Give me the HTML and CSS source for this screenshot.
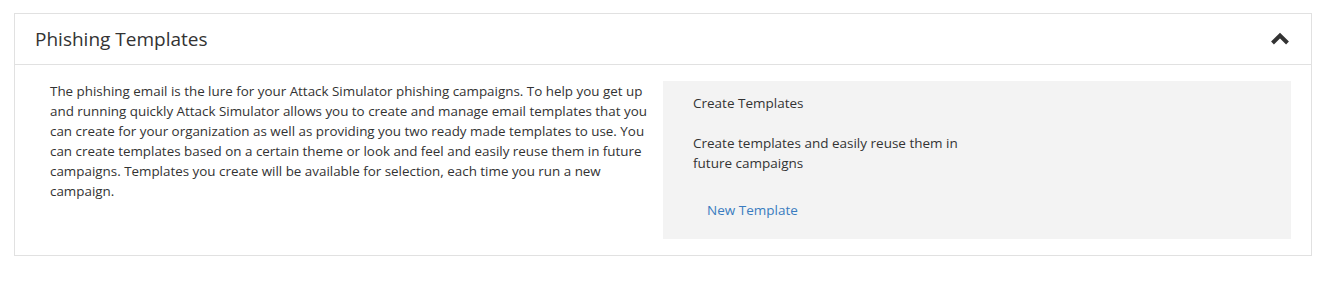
FILE: index.html
```html
<!DOCTYPE html>
<html lang="en">

<head>
    <meta charset="UTF-8">
    <meta name="viewport" content="width=device-width, initial-scale=1.0">
    <title>Phishing Templates</title>
    <link rel="stylesheet" href="styles.css">
</head>

<body>
    <div class="section">
        <div class="section-header">
            <h2>Phishing Templates</h2>
            <button class="collapse-button" aria-label="Collapse">
                <svg width="20" height="14" viewBox="0 0 20 14">
                    <polyline points="2.5,11 10,3.5 17.5,11" fill="none" stroke="#333" stroke-width="4" stroke-linejoin="miter" />
                </svg>
            </button>
        </div>
        <div class="section-body">
            <div class="intro">
                <p>The phishing email is the lure for your Attack Simulator phishing campaigns. To help you get up and running quickly Attack Simulator allows you to create and manage email templates that you can create for your organization as well as providing you two ready made templates to use. You can create templates based on a certain theme or look and feel and easily reuse them in future campaigns. Templates you create will be available for selection, each time you run a new campaign.</p>
            </div>
            <div class="action-card">
                <h3>Create Templates</h3>
                <p>Create templates and easily reuse them in future campaigns</p>
                <a href="#" class="action-link">New Template</a>
            </div>
        </div>
    </div>
</body>

</html>
```

FILE: styles.css
```css
body {
    font-family: "Open Sans", "Noto Sans", sans-serif;
    color: #333;
    background-color: #fff;
    margin: 0;
    padding: 13px 31px 0 14px;
}

.section {
    border: 1px solid #e1e1e1;
}

.section-header {
    display: flex;
    align-items: center;
    justify-content: space-between;
    height: 50px;
    padding: 0 20px;
    border-bottom: 1px solid #e1e1e1;
}

.section-header h2 {
    margin: 0;
    font-size: 19px;
    font-weight: 400;
    color: #333;
}

.collapse-button {
    background: none;
    border: none;
    padding: 0;
    margin-right: 1px;
    cursor: pointer;
    display: flex;
}

.section-body {
    display: grid;
    grid-template-columns: 1fr 628px;
    padding: 16px 20px 16px 19px;
}

.intro {
    padding: 0 3px 0 16px;
}

.intro p {
    margin: 0;
    font-size: 13.4px;
    line-height: 20px;
}

.action-card {
    background-color: #f3f3f3;
    padding: 12px 30px 19px;
    font-size: 13.5px;
    line-height: 20px;
}

.action-card h3 {
    margin: 0 0 20px;
    font-size: 13.5px;
    font-weight: 400;
}

.action-card p {
    margin: 0 0 27px;
    max-width: 275px;
}

.action-link {
    display: inline-block;
    margin-left: 14px;
    color: #3a7cc0;
    text-decoration: none;
}
```
